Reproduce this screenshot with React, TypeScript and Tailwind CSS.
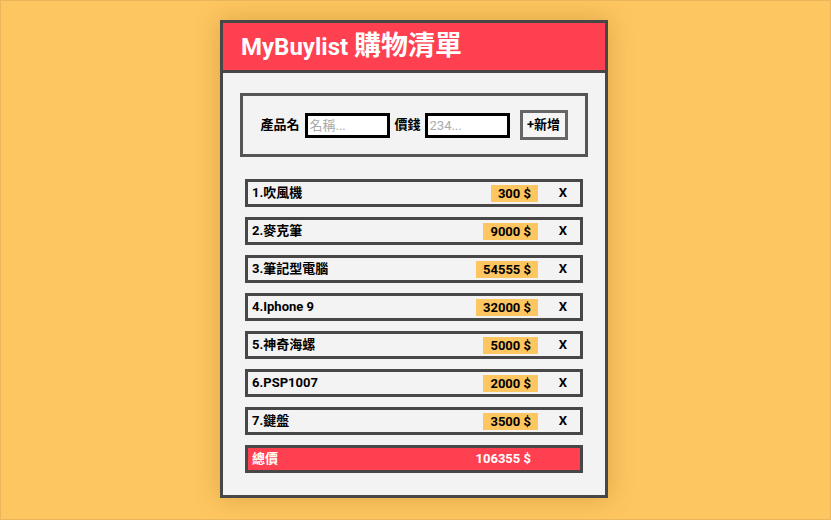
import { useState } from 'react';

interface Item {
  id: number;
  name: string;
  price: number;
}

const INITIAL: Item[] = [
  { id: 1, name: '吹風機', price: 300 },
  { id: 2, name: '麥克筆', price: 9000 },
  { id: 3, name: '筆記型電腦', price: 54555 },
  { id: 4, name: 'Iphone 9', price: 32000 },
  { id: 5, name: '神奇海螺', price: 5000 },
  { id: 6, name: 'PSP1007', price: 2000 },
  { id: 7, name: '鍵盤', price: 3500 },
];

const FONT = { fontFamily: 'Roboto, "Noto Sans CJK TC", sans-serif' };

export default function App() {
  const [items, setItems] = useState<Item[]>(INITIAL);
  const [name, setName] = useState('');
  const [price, setPrice] = useState('');

  const total = items.reduce((sum, i) => sum + i.price, 0);

  const handleAdd = () => {
    if (!name.trim() || !price) return;
    setItems([...items, { id: Date.now(), name: name.trim(), price: Number(price) }]);
    setName('');
    setPrice('');
  };

  return (
    <div className="w-full h-[520px] bg-[#fec660] border border-[#e9b65a] overflow-hidden" style={FONT}>
      <div className="ml-[219px] mt-[19px] w-[388px] h-[478px] bg-[#f3f3f3] border-[3px] border-[#474747] shadow-[0_0_24px_rgba(120,70,0,0.25)] flex flex-col">
        {/* Header */}
        <div className="h-[50px] bg-[#ff4050] border-b-[3px] border-[#474747] flex items-center pl-[18px]">
          <h1 className="text-white font-bold text-[24px] leading-none">
            MyBuylist <span className="text-[27px]">購物清單</span>
          </h1>
        </div>

        {/* Form */}
        <div className="mt-[20px] mx-[17px] h-[64px] border-[3px] border-[#555] flex items-center justify-center text-[13px] font-bold text-black">
          <label className="mr-[5px]">產品名</label>
          <input
            value={name}
            onChange={(e) => setName(e.target.value)}
            placeholder="名稱..."
            className="w-[85px] h-[25px] bg-white border-[3px] border-black px-[2px] text-[13px] font-normal placeholder:text-[#aaa] outline-none"
          />
          <label className="ml-[5px] mr-[4px]">價錢</label>
          <input
            value={price}
            onChange={(e) => setPrice(e.target.value)}
            placeholder="234..."
            className="w-[85px] h-[25px] bg-white border-[3px] border-black px-[2px] text-[13px] font-normal placeholder:text-[#aaa] outline-none"
          />
          <button
            onClick={handleAdd}
            className="ml-[10px] h-[30px] w-[48px] bg-[#f5f5f5] border-[3px] border-[#666] text-[13px] font-bold"
          >
            +新增
          </button>
        </div>

        {/* List */}
        <ul className="mt-[22px] mx-[22px] flex flex-col gap-[10px]">
          {items.map((item, idx) => (
            <li
              key={item.id}
              className="h-[28px] border-[3px] border-[#474747] flex items-center pl-[4px] text-[13px] font-bold text-black"
            >
              <span className="flex-1">
                {idx + 1}.{item.name}
              </span>
              <span className="h-[17px] leading-[17px] px-[7px] bg-[#fec660]">{item.price} $</span>
              <button
                onClick={() => setItems(items.filter((i) => i.id !== item.id))}
                className="ml-[8px] w-[34px] text-center font-bold"
              >
                X
              </button>
            </li>
          ))}
          <li className="h-[28px] border-[3px] border-[#474747] bg-[#ff4050] flex items-center pl-[4px] text-[13px] font-bold text-white">
            <span className="flex-1">總價</span>
            <span className="px-[7px]">{total} $</span>
            <span className="ml-[8px] w-[34px]" />
          </li>
        </ul>
      </div>
    </div>
  );
}
